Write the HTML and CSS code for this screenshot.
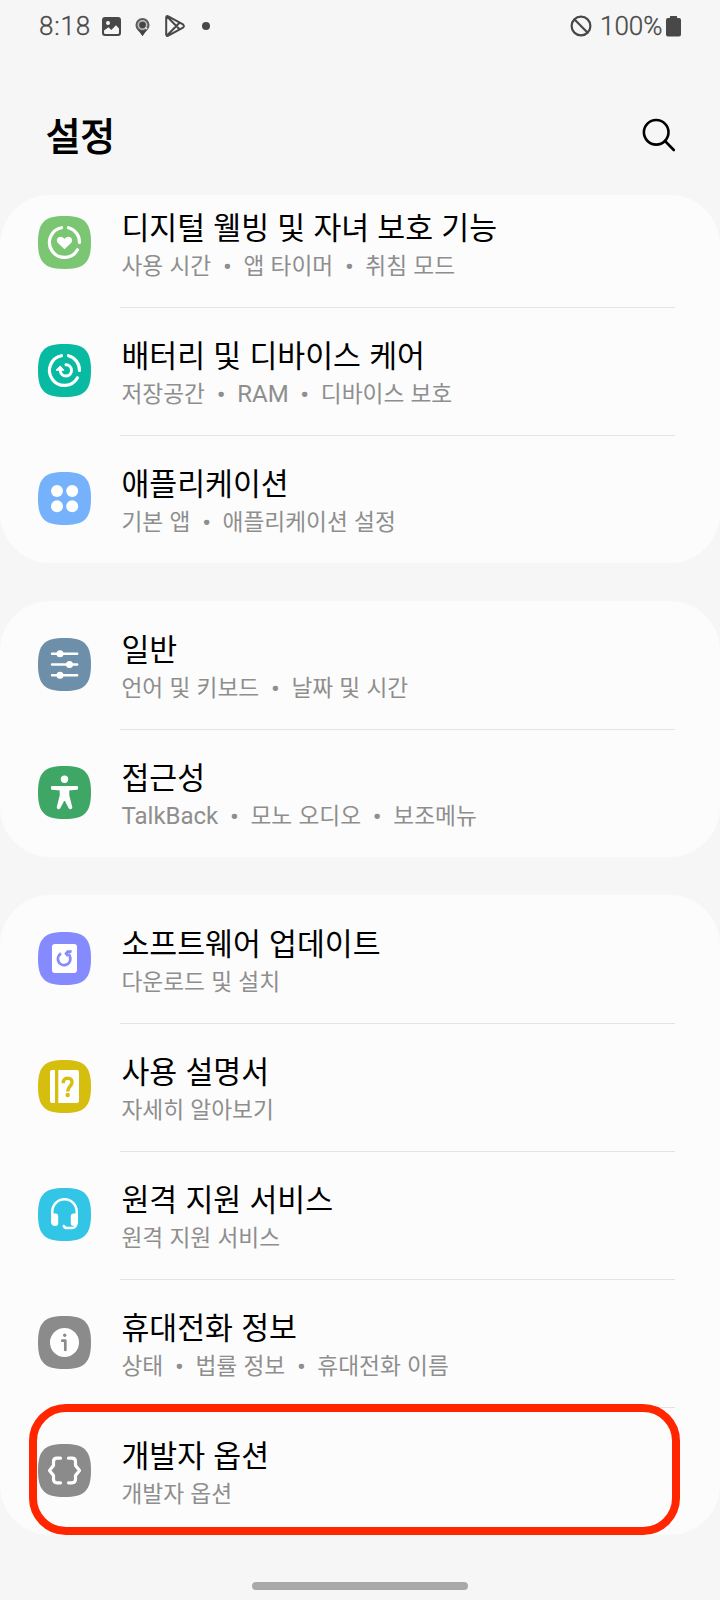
FILE: index.html
```html
<!DOCTYPE html>
<html lang="ko">
<head>
<meta charset="utf-8">
<title>설정</title>
<link rel="stylesheet" href="styles.css">
</head>
<body>
<svg class="defs" width="0" height="0" aria-hidden="true">
  <symbol id="tile" viewBox="0 0 53 53"><path d="M26.500 0C46.500 0 53 6.500 53 26.500S46.500 53 26.500 53 0 46.500 0 26.500 6.500 0 26.500 0Z"/></symbol>
</svg>
<div class="phone">
  <header class="status">
    <span class="clock">8:18</span>
    <svg class="s-image" width="19" height="19" viewBox="0 0 19 19"><path fill="#484848" fill-rule="evenodd" d="M3 0H16a3 3 0 0 1 3 3V16a3 3 0 0 1-3 3H3a3 3 0 0 1-3-3V3a3 3 0 0 1 3-3ZM6 4a2 2 0 1 0 0 4 2 2 0 0 0 0-4ZM2 13.500V15.500a1.500 1.500 0 0 0 1.500 1.500H15.500a1.500 1.500 0 0 0 1.500-1.500V11.500L14 8.300 9.300 13 6.600 10.300Z"/></svg>
    <svg class="s-pin" width="15" height="18" viewBox="0 0 15 18"><path fill="#5c5c5c" d="M7.500 0A7 7 0 0 0 .5 7c0 3.500 2.500 5.500 4.500 7.500L7.500 18 10 14.500c2-2 4.500-4 4.500-7.500a7 7 0 0 0-7-7Z"/><circle cx="7.500" cy="7" r="4.200" fill="#666" stroke="#bdbdbd" stroke-width="1.500"/><circle cx="7.500" cy="7" r="3" fill="#444"/><path d="M10.300 9.500l1.800 1.500" stroke="#eee" stroke-width="1.300"/><path fill="#444" d="M3.500 12.300Q7.500 13 11.500 12.300L7.500 18Z"/></svg>
    <svg class="s-play" width="20" height="22" viewBox="0 0 20 22" fill="none" stroke="#484848" stroke-width="2" stroke-linejoin="round" stroke-linecap="round"><path d="M1.200 2.500V19.500Q1.400 21.600 3.300 20.700L18 12.600Q19.800 11 18 9.400L3.300 1.300Q1.400.4 1.200 2.500ZM2 1.500L14.500 14.200M2 20.500L14.500 7.800"/></svg>
    <i class="s-dot"></i>
    <svg class="s-block" width="22" height="22" viewBox="0 0 22 22" fill="none" stroke="#484848" stroke-width="2.200"><circle cx="11" cy="11" r="9.400"/><path d="M4.300 4.300l13.400 13.400"/></svg>
    <span class="percent">100%</span>
    <svg class="s-battery" width="15" height="21" viewBox="0 0 15 21"><path fill="#484848" d="M4.500 0h6q.6 0 .6.600V2h1.900a2 2 0 0 1 2 2V18.500a2 2 0 0 1-2 2H2a2 2 0 0 1-2-2V4a2 2 0 0 1 2-2H3.900V.6Q3.900 0 4.500 0Z"/></svg>
  </header>
  <div class="appbar">
    <h1>설정</h1>
    <svg width="34" height="35" viewBox="0 0 34 35" fill="none" stroke="#000" stroke-width="2.600" stroke-linecap="round"><circle cx="14.200" cy="14.300" r="12.300"/><path d="M23 23l8.800 9"/></svg>
  </div>
  <main>
    <section class="card card-scrolled">
      <div class="row">
        <svg class="icon" viewBox="0 0 53 53"><use href="#tile" fill="#7ac673"/><g fill="none" stroke="#fff" stroke-width="3.200" stroke-linecap="round"><path d="M30.500 11.700A15 15 0 0 1 41.500 26.500M39.500 33.800A15 15 0 1 1 23.500 11.700"/></g><path fill="#fff" d="M26.500 33.300L20.200 27.300C17.500 24.500 19.300 20.700 22.500 20.700 24.400 20.700 25.700 21.700 26.500 23 27.300 21.700 28.600 20.700 30.500 20.700 33.700 20.700 35.500 24.500 32.800 27.300Z"/></svg>
        <div class="text"><h2>디지털 웰빙 및 자녀 보호 기능</h2><p>사용 시간<b>•</b>앱 타이머<b>•</b>취침 모드</p></div>
      </div>
      <div class="row">
        <svg class="icon" viewBox="0 0 53 53"><use href="#tile" fill="#09baa3"/><g fill="none" stroke="#fff" stroke-width="3.200" stroke-linecap="round"><path d="M30.500 11.700A15 15 0 0 1 41.500 26.500M39.500 33.800A15 15 0 1 1 23.500 11.700"/><path stroke-width="3" d="M28 20.800A5.600 5.600 0 1 1 22.300 26.500"/></g><path fill="#fff" stroke="#fff" stroke-linejoin="round" d="M18 26.200L22.300 22 26 26.200Z"/></svg>
        <div class="text"><h2>배터리 및 디바이스 케어</h2><p>저장공간<b>•</b><span class="latin">RAM</span><b>•</b>디바이스 보호</p></div>
      </div>
      <div class="row">
        <svg class="icon" viewBox="0 0 53 53"><use href="#tile" fill="#76b1fc"/><g fill="#fff"><circle cx="19" cy="19" r="6"/><circle cx="34.200" cy="19" r="6"/><circle cx="19" cy="34.300" r="6"/><circle cx="34.200" cy="34.300" r="6"/></g></svg>
        <div class="text"><h2>애플리케이션</h2><p>기본 앱<b>•</b>애플리케이션 설정</p></div>
      </div>
    </section>
    <section class="card">
      <div class="row">
        <svg class="icon" viewBox="0 0 53 53"><use href="#tile" fill="#6d8fa9"/><path stroke="#fff" stroke-width="2.400" stroke-linecap="round" d="M14 15.700H39.200M14 26.500H39.200M14 37.300H39.200"/><g fill="#fff"><circle cx="22" cy="15.700" r="3.500"/><circle cx="31.500" cy="26.500" r="3.500"/><circle cx="22" cy="37.300" r="3.500"/></g></svg>
        <div class="text"><h2>일반</h2><p>언어 및 키보드<b>•</b>날짜 및 시간</p></div>
      </div>
      <div class="row">
        <svg class="icon" viewBox="0 0 53 53"><use href="#tile" fill="#3fa766"/><circle cx="26.500" cy="13.300" r="3.700" fill="#fff"/><path fill="#fff" stroke="#fff" stroke-width="2" stroke-linejoin="round" d="M14 21H39V22.700L30.300 23.500V29.500L33.300 41.500Q32.700 42.700 31.600 41.800L26.500 32 21.400 41.800Q20.300 42.700 19.700 41.500L22.700 29.500V23.500L14 22.700Z"/></svg>
        <div class="text"><h2>접근성</h2><p><span class="latin">TalkBack</span><b>•</b>모노 오디오<b>•</b>보조메뉴</p></div>
      </div>
    </section>
    <section class="card">
      <div class="row">
        <svg class="icon" viewBox="0 0 53 53"><use href="#tile" fill="#858bff"/><rect x="14" y="12" width="25" height="29" rx="3" fill="#fff"/><path fill="none" stroke="#858bff" stroke-width="2.800" d="M23 21.500A6.200 6.200 0 1 0 32.300 26.300Q32.300 23.500 30.500 22"/><path fill="#858bff" d="M26.300 21.500L29 18.300 33.800 18.300 33.500 20.800 30.200 21.500 29.500 25.500Z"/></svg>
        <div class="text"><h2>소프트웨어 업데이트</h2><p>다운로드 및 설치</p></div>
      </div>
      <div class="row">
        <svg class="icon" viewBox="0 0 53 53"><use href="#tile" fill="#d5be0e"/><path fill="#fff" d="M14 10H17V43H14Q12 43 12 41V12Q12 10 14 10ZM20.300 10H39Q41 10 41 12V41Q41 43 39 43H20.300Z"/><path fill="none" stroke="#d5be0e" stroke-width="3.400" d="M25.200 23.200Q25 18.300 29.700 18.300T34 22.600C34 26 29.700 26.500 29.700 31.500"/><circle cx="29.700" cy="35" r="2.200" fill="#d5be0e"/></svg>
        <div class="text"><h2>사용 설명서</h2><p>자세히 알아보기</p></div>
      </div>
      <div class="row">
        <svg class="icon" viewBox="0 0 53 53"><use href="#tile" fill="#32c5e5"/><path fill="none" stroke="#fff" stroke-width="2.500" stroke-linecap="round" d="M14.300 28V23.500a12.200 12.200 0 0 1 24.400 0V28M38.500 35Q38 40 34 40H29Q26.500 40 25.800 38"/><path fill="#fff" d="M13 25.500H18Q20.200 25.500 20.200 28V35.500Q20.200 38 17 38T13 34.500ZM40 25.500H35Q32.800 25.500 32.800 28V35.500Q32.800 38 36 38T40 34.500Z"/></svg>
        <div class="text"><h2>원격 지원 서비스</h2><p>원격 지원 서비스</p></div>
      </div>
      <div class="row">
        <svg class="icon" viewBox="0 0 53 53"><use href="#tile" fill="#8b8b8b"/><circle cx="26.500" cy="26.500" r="14.500" fill="#fff"/><circle cx="26.700" cy="19.300" r="1.700" fill="#8b8b8b"/><path fill="none" stroke="#8b8b8b" stroke-width="2.700" stroke-linecap="round" stroke-linejoin="round" d="M24.300 24.700H27.300V34"/></svg>
        <div class="text"><h2>휴대전화 정보</h2><p>상태<b>•</b>법률 정보<b>•</b>휴대전화 이름</p></div>
      </div>
      <div class="row">
        <svg class="icon" viewBox="0 0 53 53"><use href="#tile" fill="#8b8b8b"/><path fill="none" stroke="#fff" stroke-width="3.200" stroke-linecap="round" stroke-linejoin="round" d="M22.500 14.200H19Q15.500 14.200 15.500 17.700V21.500L11.500 26.500 15.500 31.500V35.300Q15.500 38.800 19 38.800H22.500M30.500 14.200H34Q37.500 14.200 37.500 17.700V21.500L41.500 26.500 37.500 31.500V35.300Q37.500 38.800 34 38.800H30.500"/></svg>
        <div class="text"><h2>개발자 옵션</h2><p>개발자 옵션</p></div>
        <div class="highlight"></div>
      </div>
    </section>
  </main>
  <footer><div class="home-bar"></div></footer>
</div>
</body>
</html>
```

FILE: styles.css
```css
* { box-sizing: border-box; }
body { margin: 0; background: #f6f6f6; font-family: Roboto, "Noto Sans CJK KR", sans-serif; }
h1, h2, p { margin: 0; }
.defs { display: block; }
.phone { width: 720px; height: 1600px; display: flex; flex-direction: column; overflow: hidden; background: #f6f6f6; }

.status { height: 52px; display: flex; align-items: center; padding: 0 39px; color: #484848; font-size: 26px; font-weight: 300; line-height: 52px; -webkit-text-stroke: .3px #484848; }
.clock { width: 63px; letter-spacing: .8px; }
.s-image { margin-top: 1px; }
.s-pin { margin-left: 14px; margin-top: 1px; }
.s-play { margin-left: 15px; }
.s-dot { width: 8px; height: 8px; border-radius: 50%; background: #484848; margin-left: 17px; }
.s-block { margin-left: auto; margin-top: -1px; }
.percent { margin-left: 8px; width: 63px; white-space: nowrap; }
.s-battery { margin-left: 3px; }

.appbar { height: 143px; display: flex; align-items: center; justify-content: space-between; padding: 24px 44px 0 46px; }
h1 { font-size: 37.500px; font-weight: 400; line-height: 52px; -webkit-text-stroke: 1.200px #000; padding-top: 2px; }

main { display: flex; flex-direction: column; gap: 38px; }
.card { background: #fcfcfc; border-radius: 50px; }
.card-scrolled { height: 368px; display: flex; flex-direction: column; justify-content: flex-end; }
.card-scrolled .row:first-child { margin-top: -16px; }
.row { position: relative; height: 128px; flex: none; display: flex; padding: 0 45px 0 38px; }
.icon { width: 53px; height: 53px; margin-top: 37px; flex: none; }
.text { flex: 1; margin: 0 0 -1px 29px; padding: 30px 0 0 1.500px; border-bottom: 1px solid #e4e4e4; }
.row:last-child .text { border-bottom: 0; }
h2 { font-size: 30.300px; line-height: 40px; font-weight: 400; color: #000; white-space: nowrap; word-spacing: .7px; }
p { font-size: 22.700px; line-height: 36px; color: #8e8e8e; white-space: nowrap; word-spacing: .6px; }
.latin { font-size: 24px; line-height: 1; }
b { display: inline-block; width: 32.200px; text-align: center; font-weight: 700; }
.highlight { position: absolute; left: 29px; top: -3px; width: 651px; height: 131px; border: 8px solid #ff2600; border-radius: 37px; }

footer { flex: 1; display: flex; justify-content: center; align-items: flex-end; padding-bottom: 10px; }
.home-bar { width: 216px; height: 8px; border-radius: 4px; background: #a9a9a9; }
```
